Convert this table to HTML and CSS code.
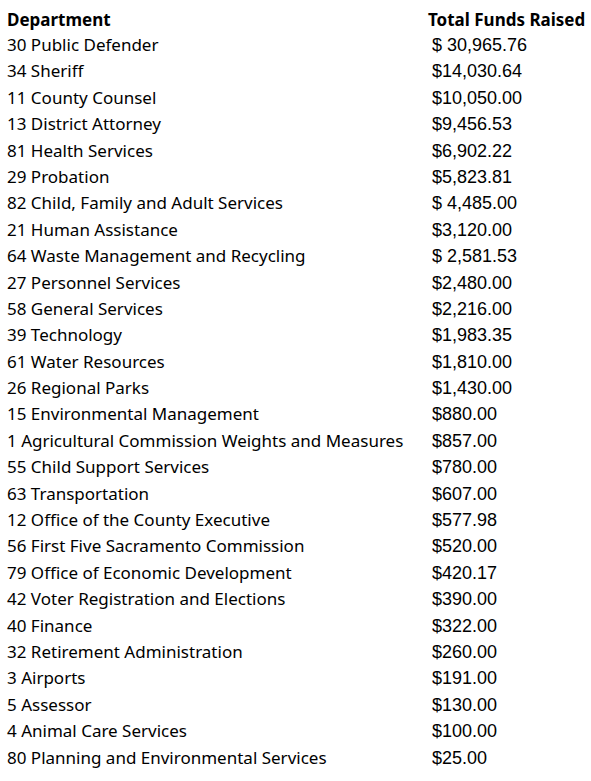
FILE: index.html
```html
<!DOCTYPE html>
<html>
<head>
<meta charset="utf-8">
<link rel="stylesheet" href="styles.css">
</head>
<body>
<div class="table">
  <div class="row head"><div class="dept">Department</div><div class="amt">Total Funds Raised</div></div>
  <div class="row"><div class="dept">30 Public Defender</div><div class="amt val">$ 30,965.76</div></div>
  <div class="row"><div class="dept">34 Sheriff</div><div class="amt val">$14,030.64</div></div>
  <div class="row"><div class="dept">11 County Counsel</div><div class="amt val">$10,050.00</div></div>
  <div class="row"><div class="dept">13 District Attorney</div><div class="amt val">$9,456.53</div></div>
  <div class="row"><div class="dept">81 Health Services</div><div class="amt val">$6,902.22</div></div>
  <div class="row"><div class="dept">29 Probation</div><div class="amt val">$5,823.81</div></div>
  <div class="row"><div class="dept">82 Child, Family and Adult Services</div><div class="amt val">$ 4,485.00</div></div>
  <div class="row"><div class="dept">21 Human Assistance</div><div class="amt val">$3,120.00</div></div>
  <div class="row"><div class="dept">64 Waste Management and Recycling</div><div class="amt val">$ 2,581.53</div></div>
  <div class="row"><div class="dept">27 Personnel Services</div><div class="amt val">$2,480.00</div></div>
  <div class="row"><div class="dept">58 General Services</div><div class="amt val">$2,216.00</div></div>
  <div class="row"><div class="dept">39 Technology</div><div class="amt val">$1,983.35</div></div>
  <div class="row"><div class="dept">61 Water Resources</div><div class="amt val">$1,810.00</div></div>
  <div class="row"><div class="dept">26 Regional Parks</div><div class="amt val">$1,430.00</div></div>
  <div class="row"><div class="dept">15 Environmental Management</div><div class="amt val">$880.00</div></div>
  <div class="row"><div class="dept">1 Agricultural Commission Weights and Measures</div><div class="amt val">$857.00</div></div>
  <div class="row"><div class="dept">55 Child Support Services</div><div class="amt val">$780.00</div></div>
  <div class="row"><div class="dept">63 Transportation</div><div class="amt val">$607.00</div></div>
  <div class="row"><div class="dept">12 Office of the County Executive</div><div class="amt val">$577.98</div></div>
  <div class="row"><div class="dept">56 First Five Sacramento Commission</div><div class="amt val">$520.00</div></div>
  <div class="row"><div class="dept">79 Office of Economic Development</div><div class="amt val">$420.17</div></div>
  <div class="row"><div class="dept">42 Voter Registration and Elections</div><div class="amt val">$390.00</div></div>
  <div class="row"><div class="dept">40 Finance</div><div class="amt val">$322.00</div></div>
  <div class="row"><div class="dept">32 Retirement Administration</div><div class="amt val">$260.00</div></div>
  <div class="row"><div class="dept">3 Airports</div><div class="amt val">$191.00</div></div>
  <div class="row"><div class="dept">5 Assessor</div><div class="amt val">$130.00</div></div>
  <div class="row"><div class="dept">4 Animal Care Services</div><div class="amt val">$100.00</div></div>
  <div class="row"><div class="dept">80 Planning and Environmental Services</div><div class="amt val">$25.00</div></div>
</div>
</body>
</html>
```
FILE: styles.css
```css
html, body {
  margin: 0;
  padding: 0;
  background: #ffffff;
}
body {
  font-family: "Noto Sans", sans-serif;
  font-size: 17px;
  color: #000;
}
.table {
  padding: 7px 0 0 7px;
  display: flex;
  flex-direction: column;
}
.row {
  display: grid;
  grid-template-columns: 421px auto;
  height: 26.4px;
  line-height: 26.4px;
  align-items: baseline;
  white-space: nowrap;
}
.head {
  font-weight: 700;
  height: 25px;
  line-height: 25px;
}
.val {
  padding-left: 4px;
  font-family: "Liberation Sans", Arial, sans-serif;
  font-size: 18px;
}
```
